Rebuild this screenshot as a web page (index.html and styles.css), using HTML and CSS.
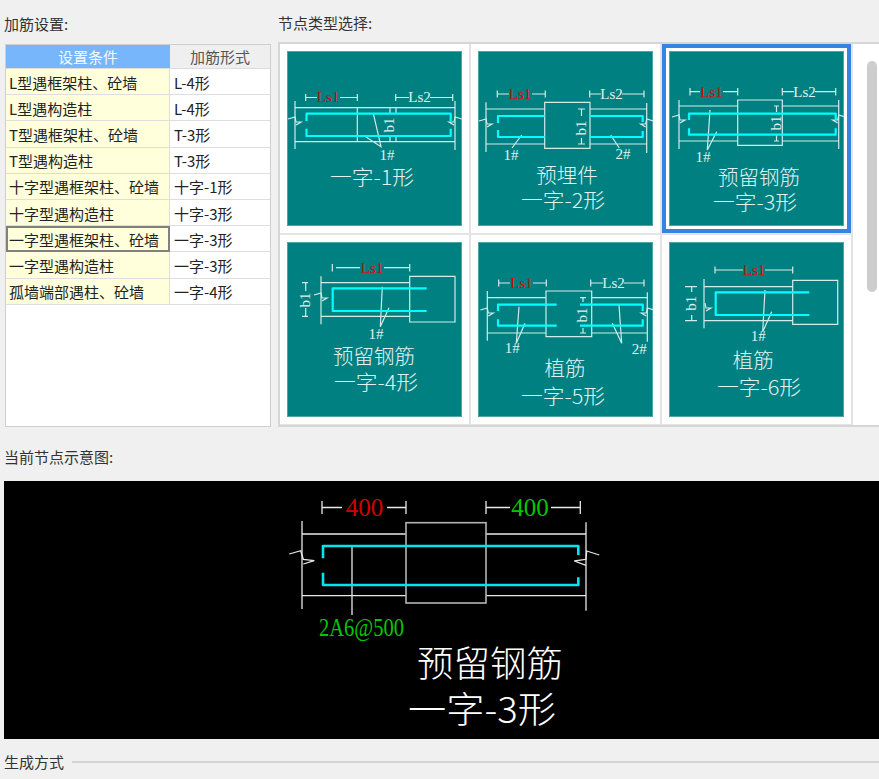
FILE: index.html
```html
<!DOCTYPE html>
<html lang="zh-CN">
<head>
<meta charset="utf-8">
<title>加筋设置</title>
<link rel="stylesheet" href="styles.css">
</head>
<body>
<main class="page">
  <div class="top">
    <section class="left">
      <h2 class="label label-top">加筋设置:</h2>
      <div class="table">
        <div class="th th-on">设置条件</div><div class="th">加筋形式</div>
        <div class="td cond">L型遇框架柱、砼墙</div><div class="td">L-4形</div>
        <div class="td cond">L型遇构造柱</div><div class="td">L-4形</div>
        <div class="td cond">T型遇框架柱、砼墙</div><div class="td">T-3形</div>
        <div class="td cond">T型遇构造柱</div><div class="td">T-3形</div>
        <div class="td cond">十字型遇框架柱、砼墙</div><div class="td">十字-1形</div>
        <div class="td cond">十字型遇构造柱</div><div class="td">十字-3形</div>
        <div class="td cond active">一字型遇框架柱、砼墙</div><div class="td">一字-3形</div>
        <div class="td cond">一字型遇构造柱</div><div class="td">一字-3形</div>
        <div class="td cond">孤墙端部遇柱、砼墙</div><div class="td">一字-4形</div>
      </div>
    </section>
    <section class="right">
      <h2 class="label label-top label-right">节点类型选择:</h2>
      <div class="chooser">
        <div class="grid">
          <div class="cell">
            <svg class="card" viewBox="0 0 175 175">
              <path class="ln" d="M18.7 43V50M18.7 46.5H30M53 46.5H70.3M70.3 43V50M108.7 43V50M108.7 46.5H122M143 46.5H165.7M165.7 43V50"/>
              <text class="ls red" x="41" y="51">Ls1</text><text class="ls" x="132.5" y="51">Ls2</text>
              <path class="ln" d="M8 50V98M168 50V99M8 56.7H168M8 90.7H168M70.3 56.7V90.7M103 56.7V62M109 56.7V62M103 85V90.7M109 85V90.7M86.3 62.3L94 95.7L78.7 85.7"/>
              <path class="ln" transform="translate(8 68)" d="M-7 0L0 -2L1 3L6 3L1 6"/>
              <path class="ln" transform="translate(168 68) scale(-1 1)" d="M-7 0L0 -2L1 3L6 3L1 6"/>
              <path class="rb" d="M19.5 70V62.7H163.7V70M19.5 77.7V85H163.7V77.7"/>
              <text class="ls" transform="translate(107 74) rotate(-90)">b1</text>
              <text class="ls" x="100" y="109">1#</text>
              <text class="title" x="85" y="134" textLength="84" lengthAdjust="spacingAndGlyphs">一字-1形</text>
            </svg>
          </div>
          <div class="cell">
            <svg class="card" viewBox="0 0 175 175">
              <path class="ln" d="M19.3 39.5V46.5M19.3 43H31M54 43H67.3M67.3 39.5V46.5M111.7 39.5V46.5M111.7 43H123M144 43H166M166 39.5V46.5"/>
              <text class="ls red" x="42" y="48">Ls1</text><text class="ls" x="133.5" y="48">Ls2</text>
              <path class="ln" d="M8 51.3V101M168.7 52V102M8 58H66.7M8 93H66.7M112 58H168.7M112 93H168.7M66.7 51.3H112V97.3H66.7ZM100 58H107M103.5 58V65M100 93H107M103.5 87V93M43.7 84L34 97M132.7 84L141.3 97"/>
              <path class="ln" transform="translate(8 70)" d="M-7 0L0 -2L1 3L6 3L1 6"/>
              <path class="ln" transform="translate(168.7 70) scale(-1 1)" d="M-7 0L0 -2L1 3L6 3L1 6"/>
              <path class="rb" d="M20 72V65H66.7M20 79V86H66.7M112 65H164.7V71M112 86H164.7V80"/>
              <text class="ls" transform="translate(107.5 77) rotate(-90)">b1</text>
              <text class="ls" x="33" y="109">1#</text><text class="ls" x="145" y="108">2#</text>
              <text class="title" x="89" y="132">预埋件</text>
              <text class="title" x="85" y="157" textLength="84" lengthAdjust="spacingAndGlyphs">一字-2形</text>
            </svg>
          </div>
          <div class="cell">
            <svg class="card card-on" viewBox="0 0 175 175">
              <path class="ln" d="M21 37V44.5M21 40.7H31M54 40.7H68.7M68.7 37V44.5M113.3 37V44.5M113.3 40.7H125M146 40.7H166.7M166.7 37V44.5"/>
              <text class="ls red" x="42.5" y="46">Ls1</text><text class="ls" x="135.5" y="46">Ls2</text>
              <path class="ln" d="M10 49V98M169.7 49V98M10 55H68.7M10 90H68.7M113.3 55H169.7M113.3 90H169.7M68.7 49H113.3V94.3H68.7ZM105 55H110M107.5 55V61M105 90H110M107.5 84V90M41 59L38.3 99L47.7 80.7"/>
              <path class="ln" transform="translate(10 66)" d="M-7 0L0 -2L1 3L6 3L1 6"/>
              <path class="ln" transform="translate(169.7 66) scale(-1 1)" d="M-7 0L0 -2L1 3L6 3L1 6"/>
              <path class="rb" d="M20 69V62.7H166.7V69M20 77.3V83.7H166.7V77.3"/>
              <text class="ls" transform="translate(111.5 72) rotate(-90)">b1</text>
              <text class="ls" x="34" y="111">1#</text>
              <text class="title" x="90" y="134">预留钢筋</text>
              <text class="title" x="86" y="159" textLength="84" lengthAdjust="spacingAndGlyphs">一字-3形</text>
            </svg>
          </div>
          <div class="cell">
            <svg class="card" viewBox="0 0 175 175">
              <path class="ln" d="M45.3 22V29.5M49 25.7H73M97 25.7H122.7M122.7 22V29.5"/>
              <text class="ls red" x="85" y="31">Ls1</text>
              <path class="ln" d="M34 34.3V82.3M34 40.7H122.7M34 74.3H122.7M122.7 34.3H168V80H122.7ZM15 40.7H21M18.7 40.7V49M15 74.3H21M18.7 66V74.3M95.3 44.7L93.3 84.7L102 65.7"/>
              <path class="ln" transform="translate(34 53)" d="M-7 0L0 -2L1 3L6 3L1 6"/>
              <path class="rb" d="M139.7 46.3H45.7V69H139.7"/>
              <text class="ls" transform="translate(22.5 58) rotate(-90)">b1</text>
              <text class="ls" x="89" y="97">1#</text>
              <text class="title" x="87" y="122">预留钢筋</text>
              <text class="title" x="89" y="148" textLength="84" lengthAdjust="spacingAndGlyphs">一字-4形</text>
            </svg>
          </div>
          <div class="cell">
            <svg class="card" viewBox="0 0 175 175">
              <path class="ln" d="M20.7 37.5V44.5M20.7 41H32M55 41H68.3M68.3 37.5V44.5M112.7 37.5V44.5M112.7 41H125M146 41H166M166 37.5V44.5"/>
              <text class="ls red" x="43.5" y="46">Ls1</text><text class="ls" x="135.5" y="46">Ls2</text>
              <path class="ln" d="M9.3 49V98.7M169.3 50.3V99.7M9.3 55.7H68M9.3 91H68M113.7 55.7H169.3M113.7 91H169.3M68 49H113.7V94.7H68ZM102 55.7H108M105 55.7V60M102 91H108M105 86V91M41 64.7L38.3 101.3L47 81.3M141 63L143.7 101.3L134.3 81.3"/>
              <path class="ln" transform="translate(9.3 68)" d="M-7 0L0 -2L1 3L6 3L1 6"/>
              <path class="ln" transform="translate(169.3 68) scale(-1 1)" d="M-7 0L0 -2L1 3L6 3L1 6"/>
              <path class="rb" d="M20 69V62.7H78.7M20 77.3V83.7H78.7M102 62.7H164.7V69M102 83.7H164.7V77.3"/>
              <text class="ls" transform="translate(109 73) rotate(-90)">b1</text>
              <text class="ls" x="34.3" y="111">1#</text><text class="ls" x="161.3" y="112">2#</text>
              <text class="title" x="87" y="134">植筋</text>
              <text class="title" x="85" y="162" textLength="84" lengthAdjust="spacingAndGlyphs">一字-5形</text>
            </svg>
          </div>
          <div class="cell">
            <svg class="card" viewBox="0 0 175 175">
              <path class="ln" d="M46 24.5V31.5M46 28H74M96 28H123.7M123.7 24.5V31.5"/>
              <text class="ls red" x="85" y="33">Ls1</text>
              <path class="ln" d="M35 37V86.3M35 44.7H123.7M35 78.7H123.7M123.7 38.3H168.7V82.3H123.7ZM16 44.7H28M22.7 44.7V50M16 78.7H28M22.7 73V78.7M96 48L93.7 89.7L102.7 69.7"/>
              <path class="ln" transform="translate(36 63)" d="M0 -2L1 3L6 3L1 6"/>
              <path class="rb" d="M140.3 50.3H46.7V73H140.3"/>
              <text class="ls" transform="translate(26.5 61.3) rotate(-90)">b1</text>
              <text class="ls" x="89.3" y="99">1#</text>
              <text class="title" x="84.3" y="126">植筋</text>
              <text class="title" x="90" y="153" textLength="84" lengthAdjust="spacingAndGlyphs">一字-6形</text>
            </svg>
          </div>
        </div>
        <div class="thumb"></div>
      </div>
    </section>
  </div>
  <h2 class="label label-mid">当前节点示意图:</h2>
  <div class="preview">
    <svg class="preview-svg" viewBox="0 0 875 258">
      <path class="wl" d="M318 20V33M318 26.5H338M383 26.5H402M402 20V33M482 20V33M482 26.5H506M547 26.5H576.3M576.3 20V33"/>
      <text class="dim dim-red" x="360.5" y="35">400</text>
      <text class="dim dim-green" x="526" y="35">400</text>
      <path class="wl" d="M298 40V128M582 41.3V129.7M298 53H402M298 114.7H402M482 53H582M482 114.7H582M348 65V134"/>
      <path class="wl" d="M285.3 73L296.7 69.7L299.3 78.3L310.3 79.7L299.3 83M595.3 74L582.7 70L582 78.3L570.3 80L582 84.3"/>
      <rect class="gl" x="402" y="41.7" width="80" height="80.3"/>
      <path class="cy" d="M319 77.3V65H574.3V74M319 91.7V104H574.3V96.3"/>
      <text class="bar-note" x="315" y="155" textLength="85" lengthAdjust="spacingAndGlyphs">2A6@500</text>
      <text class="big" x="486" y="196" textLength="146" lengthAdjust="spacingAndGlyphs">预留钢筋</text>
      <text class="big" x="478" y="242" textLength="148" lengthAdjust="spacingAndGlyphs">一字-3形</text>
    </svg>
  </div>
  <div class="legend"><span class="legend-text">生成方式</span><span class="legend-line"></span></div>
</main>
</body>
</html>
```

FILE: styles.css
```css
* { box-sizing: border-box; }
html, body { margin: 0; padding: 0; }
body {
  width: 879px;
  height: 779px;
  overflow: hidden;
  background: #f0f0f0;
  font-family: "Noto Sans CJK SC", "Noto Sans", sans-serif;
  font-size: 15px;
  color: #333;
}
.page { display: flex; flex-direction: column; width: 879px; }
.top { display: flex; height: 427px; }
.left { width: 278px; padding-left: 4px; display: flex; flex-direction: column; }
.right { flex: 1; min-width: 0; display: flex; flex-direction: column; }
.label { margin: 0; font-size: 15px; font-weight: 400; line-height: 20px; color: #333; }
.label-top { padding-top: 14px; height: 44px; }
.label-right { height: 42px; padding-top: 13px; }
.table {
  margin-left: 1px;
  width: 266px;
  height: 383px;
  background: #fff;
  border: 1px solid #cfcfcf;
  display: grid;
  grid-template-columns: 164px 100px;
  grid-auto-rows: 26.2px;
  grid-template-rows: 24px;
  align-content: start;
}
.th {
  display: flex; align-items: center; justify-content: center;
  background: #efefef;
  color: #555;
  font-size: 15px;
  border-bottom: 1px solid #dcdcdc;
}
.th-on { background: #78b6fb; color: #f4f9ff; }
.td {
  display: flex; align-items: center;
  padding: 1px 0 0 4px;
  font-size: 15px;
  white-space: nowrap;
  color: #222;
  border-bottom: 1px solid #dedede;
  background: #fff;
}
.cond { background: #ffffdc; border-right: 1px solid #dedede; padding-left: 3px; }
.active { border: 2px solid #808080; padding: 0 0 0 1px; }
.chooser {
  display: flex;
  height: 385px;
  background: #fff;
  border: solid #d6d6d6;
  border-width: 2px 0 2px 2px;
  overflow: hidden;
}
.grid {
  display: grid;
  grid-template-columns: repeat(3, 191px);
  grid-auto-rows: 191px;
  width: 573px;
  flex: none;
}
.cell {
  padding: 7px 0 0 7px;
  border-right: 2px solid #e4e4e4;
  border-bottom: 2px solid #e4e4e4;
}
.card {
  display: block;
  width: 175px;
  height: 175px;
  background: #008080;
  box-shadow: inset 0 0 0 1px #4ea5a5;
}
.card-on { outline: 4px solid #3584e4; outline-offset: 3px; }
.thumb {
  width: 10px;
  height: 231px;
  margin: 17px 0 0 14px;
  flex: none;
  background: #cdcdcd;
  border-radius: 5px;
}
.ln { fill: none; stroke: #d2ecea; stroke-width: 1.2; }
.rb { fill: none; stroke: #00ffff; stroke-width: 2.2; stroke-linejoin: round; }
.ls {
  font-family: "Liberation Serif", serif;
  font-size: 15px;
  fill: #e0f2f1;
  text-anchor: middle;
}
.red { fill: #e80000; }
.title {
  font-family: "Noto Sans CJK SC", sans-serif;
  font-weight: 300;
  font-size: 20.5px;
  fill: #e2f2f1;
  text-anchor: middle;
}
.label-mid { height: 54px; padding-top: 20px; padding-left: 4px; }
.preview {
  margin-left: 4px;
  width: 875px;
  height: 258px;
  background: #000;
}
.preview-svg { display: block; width: 875px; height: 258px; }
.wl { fill: none; stroke: #e8e8e8; stroke-width: 1.3; }
.gl { fill: none; stroke: #b4b4b4; stroke-width: 1.6; }
.cy { fill: none; stroke: #00e6f0; stroke-width: 2.6; stroke-linejoin: round; }
.dim { font-family: "Liberation Serif", serif; font-size: 25px; text-anchor: middle; }
.dim-red { fill: #d40000; }
.dim-green { fill: #00c800; }
.bar-note { font-family: "Liberation Serif", serif; font-size: 25px; fill: #00c800; }
.big {
  font-family: "Noto Sans CJK SC", sans-serif;
  font-weight: 300;
  font-size: 36px;
  fill: #fff;
  text-anchor: middle;
}
.legend { display: flex; align-items: center; gap: 8px; padding: 6px 0 0 4px; height: 40px; }
.legend-text { font-size: 15px; line-height: 20px; color: #333; flex: none; }
.legend-line { flex: 1; height: 2px; background: #d4d4d4; }
```
